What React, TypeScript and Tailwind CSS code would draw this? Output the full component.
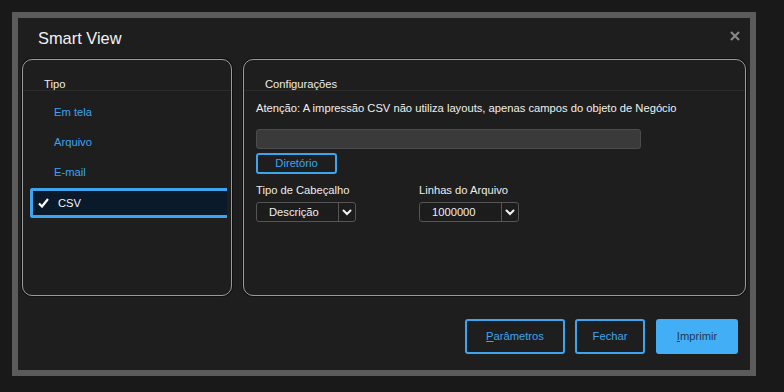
function Chevron() {
  return (
    <svg width="10" height="7" viewBox="0 0 10 7" fill="none">
      <path d="M1.5 1.5 L5 5 L8.5 1.5" stroke="#f2f2f2" strokeWidth="2" strokeLinecap="round" />
    </svg>
  );
}

function Select({ value }: { value: string }) {
  return (
    <div className="flex h-[20px] w-[100px] rounded-[3px] border border-[#555] bg-[#1c1c1c]">
      <div className="flex flex-1 items-center pl-3 text-[11.2px] text-[#f0f0f0]">{value}</div>
      <div className="flex w-[17px] items-center justify-center border-l border-[#555]">
        <Chevron />
      </div>
    </div>
  );
}

export default function App() {
  const items = ["Em tela", "Arquivo", "E-mail"];

  return (
    <div
      className="h-[392px] w-[784px] bg-[#191919] pl-[12px] pt-[12px]"
      style={{ fontFamily: '"Liberation Sans", Arial, sans-serif' }}
    >
      <div className="flex h-[364px] w-[744px] flex-col border-[6px] border-[#5b5b5b] bg-[#1e1e1e]">
        {/* Cabeçalho */}
        <div className="flex h-[41px] items-center justify-between pl-5 pr-[10px]">
          <h1 className="text-[16.4px] leading-none text-[#f2f2f2]">Smart View</h1>
          <svg width="10" height="10" viewBox="0 0 10 10" className="mb-[6px]">
            <path d="M1 1 L9 9 M9 1 L1 9" stroke="#8a8a8a" strokeWidth="2" />
          </svg>
        </div>

        {/* Painéis */}
        <div className="flex gap-[11px] pl-1 pr-1">
          {/* Tipo */}
          <div className="h-[237px] w-[210px] rounded-[10px] border border-[#9a9a9a] shadow-[0_0_0_1px_#111]">
            <div className="h-[31px] border-b border-[#2b2b2b] pl-[21px] pt-[17px] text-[11.2px] leading-[14px] text-[#ececec]">
              Tipo
            </div>
            <div className="flex flex-col pt-[6px]">
              {items.map((item) => (
                <div key={item} className="flex h-[30px] items-center pl-[31px] text-[11.2px] text-[#3ea4ee]">
                  {item}
                </div>
              ))}
              <div className="ml-[7px] mr-[4px] mt-[1px] flex h-[30px] items-center rounded-l-[3px] border-[3px] border-r-0 border-[#3ea4ee] bg-[#0b1a2a] pl-[5px] text-[11.2px] text-[#f4f4f4]">
                <svg width="11" height="10" viewBox="0 0 11 10">
                  <path d="M1 5.5 L4 8.5 L10 1" stroke="#ffffff" strokeWidth="2.2" fill="none" />
                </svg>
                <span className="ml-[9px]">CSV</span>
              </div>
            </div>
          </div>

          {/* Configurações */}
          <div className="h-[237px] flex-1 rounded-[10px] border border-[#9a9a9a] shadow-[0_0_0_1px_#111]">
            <div className="h-[31px] border-b border-[#2b2b2b] pl-[21px] pt-[17px] text-[11.2px] leading-[14px] text-[#ececec]">
              Configurações
            </div>
            <div className="flex flex-col pl-[12px] pt-[10px]">
              <p className="text-[11.2px] leading-[14px] text-[#f0f0f0]">
                Atenção: A impressão CSV não utiliza layouts, apenas campos do objeto de Negócio
              </p>
              <div className="mt-[14px] h-[20px] w-[385px] rounded-[3px] border border-[#4d4d4d] bg-[#3a3a3a]" />
              <button className="mt-[4px] flex h-[21px] w-[81px] items-center justify-center rounded-[3px] border-2 border-[#3ea4ee] text-[11.2px] text-[#3ea4ee]">
                Diretório
              </button>
              <div className="mt-[9px] flex gap-[63px]">
                <div className="flex flex-col gap-[5px]">
                  <span className="text-[11.2px] leading-[14px] text-[#ececec]">Tipo de Cabeçalho</span>
                  <Select value="Descrição" />
                </div>
                <div className="flex flex-col gap-[5px]">
                  <span className="text-[11.2px] leading-[14px] text-[#ececec]">Linhas do Arquivo</span>
                  <Select value="1000000" />
                </div>
              </div>
            </div>
          </div>
        </div>

        {/* Botões */}
        <div className="mt-[23px] flex justify-end gap-[10px] pr-[12px]">
          <button className="flex h-[35px] w-[100px] items-center justify-center rounded-[3px] border-2 border-[#3ea4ee] text-[11.2px] text-[#3ea4ee]">
            <span><u>P</u>arâmetros</span>
          </button>
          <button className="flex h-[35px] w-[70px] items-center justify-center rounded-[3px] border-2 border-[#3ea4ee] text-[11.2px] text-[#3ea4ee]">
            Fechar
          </button>
          <button className="ml-px flex h-[35px] w-[82px] items-center justify-center rounded-[3px] bg-[#42aef6] text-[11.2px] text-[#1d3a55]">
            <span><u>I</u>mprimir</span>
          </button>
        </div>
      </div>
    </div>
  );
}
